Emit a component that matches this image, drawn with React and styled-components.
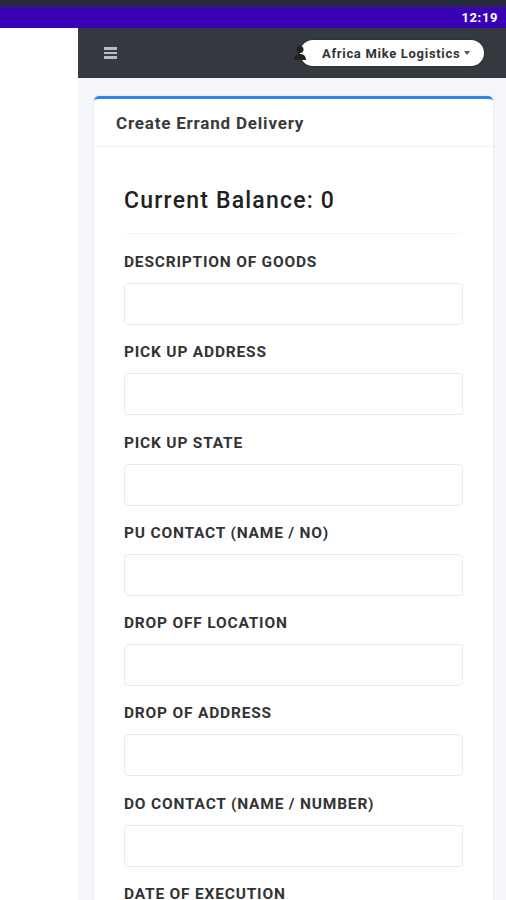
import React from 'react';
import styled, { createGlobalStyle } from 'styled-components';

const fields = [
  'Description of goods',
  'Pick up address',
  'Pick up state',
  'PU contact (name / no)',
  'Drop off location',
  'Drop of address',
  'DO contact (name / number)',
  'Date of execution',
];

const App = () => {
  return (
    <Screen>
      <GlobalStyle />
      <StatusBar>
        <Time>12:19</Time>
      </StatusBar>
      <Body>
        <Sidebar />
        <Main>
          <Navbar>
            <Burger>
              <span />
              <span />
              <span />
            </Burger>
            <UserPill>
              <UserIcon>
                <svg width='14' height='16' viewBox='0 0 14 16'>
                  <circle cx='7' cy='4.5' r='3.5' fill='#222' />
                  <path d='M1 15c0-4 2.5-6 6-6s6 2 6 6z' fill='#222' />
                </svg>
              </UserIcon>
              Africa Mike Logistics
              <Caret />
            </UserPill>
          </Navbar>
          <Content>
            <Card>
              <CardHeader>Create Errand Delivery</CardHeader>
              <CardBody>
                <Balance>Current Balance: 0</Balance>
                <Divider />
                {fields.map((f) => (
                  <Field key={f}>
                    <Label>{f}</Label>
                    <Input />
                  </Field>
                ))}
              </CardBody>
            </Card>
          </Content>
        </Main>
      </Body>
    </Screen>
  );
};

const GlobalStyle = createGlobalStyle`
  html, body {
    margin: 0;
    padding: 0;
    background: #ffffff;
    font-family: Roboto, 'Liberation Sans', sans-serif;
  }
  * { box-sizing: border-box; }
`;

const Screen = styled.div`
  width: 506px;
  height: 900px;
  overflow: hidden;
  display: flex;
  flex-direction: column;
`;

const StatusBar = styled.div`
  flex-shrink: 0;
  height: 28px;
  background: #3a02b6;
  border-top: 7px solid #262a3c;
  display: flex;
  align-items: center;
  justify-content: flex-end;
  padding-right: 8px;
`;

const Time = styled.span`
  color: #fff;
  font-size: 13px;
  font-weight: 700;
  letter-spacing: 0.6px;
`;

const Body = styled.div`
  flex: 1;
  display: flex;
  min-height: 0;
`;

const Sidebar = styled.div`
  width: 78px;
  flex-shrink: 0;
  background: #fff;
`;

const Main = styled.div`
  flex: 1;
  display: flex;
  flex-direction: column;
  min-width: 0;
`;

const Navbar = styled.div`
  flex-shrink: 0;
  height: 50px;
  background: #343a40;
  display: flex;
  align-items: center;
  justify-content: space-between;
  padding: 0 22px 0 26px;
`;

const Burger = styled.div`
  width: 13px;
  display: flex;
  flex-direction: column;
  gap: 2px;
  span {
    height: 2.5px;
    background: #b9bcc0;
  }
`;

const UserPill = styled.div`
  position: relative;
  height: 26px;
  width: 184px;
  background: #fff;
  border-radius: 13px;
  display: flex;
  align-items: center;
  padding-left: 22px;
  font-size: 13px;
  font-weight: 700;
  letter-spacing: 0.7px;
  color: #333;
  box-shadow: 0 0 3px rgba(0, 0, 0, 0.3);
`;

const UserIcon = styled.span`
  position: absolute;
  left: -7px;
  top: 5px;
  display: flex;
`;

const Caret = styled.span`
  margin-left: 4px;
  width: 0;
  height: 0;
  border-left: 3.5px solid transparent;
  border-right: 3.5px solid transparent;
  border-top: 4px solid #555;
`;

const Content = styled.div`
  flex: 1;
  background: #f4f6f9;
  padding: 18px 13px 0 16px;
`;

const Card = styled.div`
  background: #fff;
  border-top: 3px solid #2f86ef;
  border-radius: 5px 5px 0 0;
  box-shadow: 0 0 2px rgba(0, 0, 0, 0.12);
`;

const CardHeader = styled.div`
  height: 48px;
  padding: 0 22px;
  display: flex;
  align-items: center;
  font-size: 17px;
  font-weight: 700;
  letter-spacing: 0.8px;
  color: #3a3a3a;
  border-bottom: 1px solid #f0f0f0;
`;

const CardBody = styled.div`
  padding: 40px 30px 0 30px;
`;

const Balance = styled.div`
  font-size: 23px;
  font-weight: 500;
  letter-spacing: 1.2px;
  color: #222;
  line-height: 28px;
`;

const Divider = styled.div`
  height: 1px;
  background: #f5f5f5;
  margin: 18px 0 18px;
`;

const Field = styled.div`
  display: flex;
  flex-direction: column;
  margin-bottom: 17.25px;
`;

const Label = styled.label`
  font-size: 15.5px;
  font-weight: 700;
  letter-spacing: 0.8px;
  text-transform: uppercase;
  color: #333;
  line-height: 20px;
  margin-bottom: 11px;
`;

const Input = styled.div`
  height: 42px;
  border: 1px solid #eaeaea;
  border-radius: 4px;
`;

export default App;
